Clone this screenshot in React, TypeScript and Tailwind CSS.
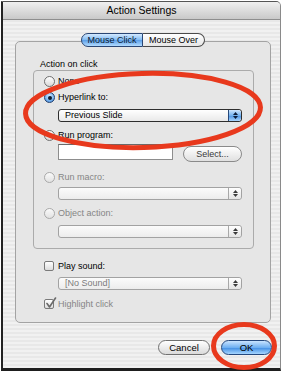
import React from "react";

function Radio({ checked = false, disabled = false }: { checked?: boolean; disabled?: boolean }) {
  if (checked) {
    return (
      <div className="relative w-[11px] h-[11px] shrink-0 rounded-full border border-[#22406e] bg-[radial-gradient(circle_at_50%_35%,#d6ebff_0%,#7db8f2_55%,#3a7dd3_100%)] flex items-center justify-center">
        <div className="w-[4px] h-[4px] rounded-full bg-[#0d1a2e]" />
      </div>
    );
  }
  return (
    <div
      className={
        disabled
          ? "w-[11px] h-[11px] shrink-0 rounded-full border border-[#a9a9a9] bg-linear-to-b from-[#fafafa] to-[#e2e2e2]"
          : "w-[11px] h-[11px] shrink-0 rounded-full border border-[#6f6f6f] bg-linear-to-b from-[#ffffff] to-[#d9d9d9]"
      }
    />
  );
}

function Stepper({ blue }: { blue: boolean }) {
  return (
    <div
      className={
        blue
          ? "w-[13px] h-full shrink-0 flex flex-col items-center justify-center gap-[1px] border-l border-[#27497a] rounded-r-[3px] bg-[linear-gradient(to_bottom,#cfe6ff_0%,#74b2f0_50%,#4b92e3_51%,#a9d6ff_100%)]"
          : "w-[13px] h-full shrink-0 flex flex-col items-center justify-center gap-[1px] border-l border-[#a8a8a8] rounded-r-[3px] bg-linear-to-b from-[#ffffff] to-[#e4e4e4]"
      }
    >
      <svg width="5" height="3" viewBox="0 0 5 3">
        <path d="M0 3 L2.5 0 L5 3 Z" fill={blue ? "#0c1d3a" : "#3a3a3a"} />
      </svg>
      <svg width="5" height="3" viewBox="0 0 5 3">
        <path d="M0 0 L2.5 3 L5 0 Z" fill={blue ? "#0c1d3a" : "#3a3a3a"} />
      </svg>
    </div>
  );
}

function Popup({ text = "", enabled = false, muted = false }: { text?: string; enabled?: boolean; muted?: boolean }) {
  return (
    <div
      className={
        enabled
          ? "flex w-[184px] h-[13px] shrink-0 rounded-[3px] border border-[#2e2e2e] bg-linear-to-b from-[#ffffff] to-[#e9e9e9]"
          : "flex w-[184px] h-[13px] shrink-0 rounded-[3px] border border-[#a2a2a2] bg-linear-to-b from-[#fbfbfb] to-[#ececec]"
      }
    >
      <div
        className={
          muted
            ? "flex-1 pl-[6px] text-[9px] leading-[11px] text-[#7c7c7c]"
            : "flex-1 pl-[6px] text-[9px] leading-[11px] text-black"
        }
      >
        {text}
      </div>
      <Stepper blue={enabled} />
    </div>
  );
}

function Checkbox({ checked = false, disabled = false }: { checked?: boolean; disabled?: boolean }) {
  return (
    <div className="relative w-[10px] h-[10px] shrink-0 rounded-[2px] border border-[#7a7a7a] bg-linear-to-b from-[#ffffff] to-[#dcdcdc]">
      {checked && (
        <svg className="absolute left-[0px] top-[-3px]" width="12" height="12" viewBox="0 0 12 12">
          <path
            d="M2 6.5 L4.5 10 L10.5 1"
            fill="none"
            stroke={disabled ? "#6a6a6a" : "#111"}
            strokeWidth="1.6"
            strokeLinecap="round"
            strokeLinejoin="round"
          />
        </svg>
      )}
    </div>
  );
}

export default function App() {
  return (
    <div className="relative w-[285px] h-[371px] overflow-hidden bg-white pl-[1px] pt-[1px] font-['Liberation_Sans',Arial,sans-serif]">
      <div className="flex flex-col w-[280px] h-[370px] border-l-2 border-t border-r border-b-[3px] border-l-[#222222] border-t-[#555555] border-r-[#8a8a8a] border-b-[#1e1e1e] rounded-tr-[5px] bg-[repeating-linear-gradient(to_bottom,#f1f1f1_0px,#f1f1f1_2px,#e8e8e8_2px,#e8e8e8_4px)]">
        {/* Title bar */}
        <div className="h-[18px] shrink-0 flex items-center justify-center rounded-tr-[4px] border-b border-[#8e8e8e] bg-linear-to-b from-[#f0f0f0] to-[#c9c9c9] text-[10.5px] leading-none text-black">
          Action Settings
        </div>

        {/* Group box */}
        <div className="mt-[21px] ml-[12px] w-[256px] h-[282px] shrink-0 flex flex-col rounded-[5px] border border-[#a3a3a3] bg-[#e6e6e6]">
          {/* Tabs */}
          <div className="-mt-[9px] h-[14px] flex justify-center">
            <div className="flex h-[14px]">
              <div className="w-[62px] h-[14px] flex items-center justify-center rounded-l-[7px] border border-[#2a4674] bg-[linear-gradient(to_bottom,#d5eaff_0%,#7fbaf3_50%,#5a9ee8_51%,#b2dbff_100%)] text-[9px] leading-none text-[#0b1a33]">
                Mouse Click
              </div>
              <div className="w-[62px] h-[14px] flex items-center justify-center rounded-r-[7px] border border-l-0 border-[#4a4a4a] bg-linear-to-b from-[#ffffff] to-[#e6e6e6] text-[9px] leading-none text-black">
                Mouse Over
              </div>
            </div>
          </div>

          {/* Label */}
          <div className="mt-[11px] ml-[24px] h-[12px] text-[9px] leading-[12px] text-black">Action on click</div>

          {/* Inner box */}
          <div className="ml-[17px] w-[221px] h-[179px] shrink-0 flex flex-col rounded-[4px] border border-[#ababab] bg-[#e6e6e6]">
            <div className="mt-[5px] ml-[10px] h-[11px] flex items-center gap-[3px]">
              <Radio />
              <span className="text-[9px] leading-none text-black">None</span>
            </div>
            <div className="mt-[5px] ml-[10px] h-[11px] flex items-center gap-[3px]">
              <Radio checked />
              <span className="text-[9px] leading-none text-black">Hyperlink to:</span>
            </div>
            <div className="mt-[6px] ml-[24px]">
              <Popup text="Previous Slide" enabled />
            </div>
            <div className="mt-[8px] ml-[10px] h-[11px] flex items-center gap-[3px]">
              <Radio />
              <span className="text-[9px] leading-none text-black">Run program:</span>
            </div>
            <div className="mt-[3px] ml-[24px] h-[18px] flex items-start gap-[10px]">
              <div className="w-[115px] h-[16px] border border-[#8d8d8d] border-t-[#6a6a6a] bg-white" />
              <div className="mt-[2px] w-[59px] h-[16px] flex items-center justify-center rounded-full border border-[#8a8a8a] bg-linear-to-b from-[#ffffff] to-[#e0e0e0] text-[9px] leading-none text-[#3a3a3a]">
                Select...
              </div>
            </div>
            <div className="mt-[10px] ml-[10px] h-[11px] flex items-center gap-[3px]">
              <Radio disabled />
              <span className="text-[9px] leading-none text-[#858585]">Run macro:</span>
            </div>
            <div className="mt-[4px] ml-[24px]">
              <Popup />
            </div>
            <div className="mt-[8px] ml-[10px] h-[11px] flex items-center gap-[3px]">
              <Radio disabled />
              <span className="text-[9px] leading-none text-[#858585]">Object action:</span>
            </div>
            <div className="mt-[6px] ml-[24px]">
              <Popup />
            </div>
          </div>

          {/* Play sound */}
          <div className="mt-[12px] ml-[28px] h-[10px] flex items-center gap-[4px]">
            <Checkbox />
            <span className="text-[9px] leading-none text-black">Play sound:</span>
          </div>
          <div className="mt-[6px] ml-[42px]">
            <Popup text="[No Sound]" muted />
          </div>
          <div className="mt-[9px] ml-[28px] h-[10px] flex items-center gap-[4px]">
            <Checkbox checked disabled />
            <span className="text-[9px] leading-none text-[#858585]">Highlight click</span>
          </div>
        </div>

        {/* Buttons */}
        <div className="mt-[17px] pr-[8px] h-[15px] flex justify-end gap-[11px]">
          <div className="w-[52px] h-[15px] flex items-center justify-center rounded-full border border-[#707070] bg-linear-to-b from-[#ffffff] to-[#dadada] text-[9.5px] leading-none text-black">
            Cancel
          </div>
          <div className="w-[51px] h-[15px] flex items-center justify-center rounded-full border border-[#24487e] bg-[linear-gradient(to_bottom,#c9e4ff_0%,#6fb0f2_50%,#3f8ce3_51%,#a6d6ff_100%)] text-[9.5px] leading-none text-black">
            OK
          </div>
        </div>
      </div>

      {/* Red annotation ellipses */}
      <svg className="absolute left-0 top-0 pointer-events-none" width="285" height="371" viewBox="0 0 285 371">
        <ellipse
          cx="143"
          cy="110.5"
          rx="117.5"
          ry="37"
          transform="rotate(-1.5 143 110.5)"
          fill="none"
          stroke="#e8391d"
          strokeWidth="5"
        />
        <ellipse cx="244" cy="346" rx="30.5" ry="21.5" fill="none" stroke="#e8391d" strokeWidth="5" />
      </svg>
    </div>
  );
}
